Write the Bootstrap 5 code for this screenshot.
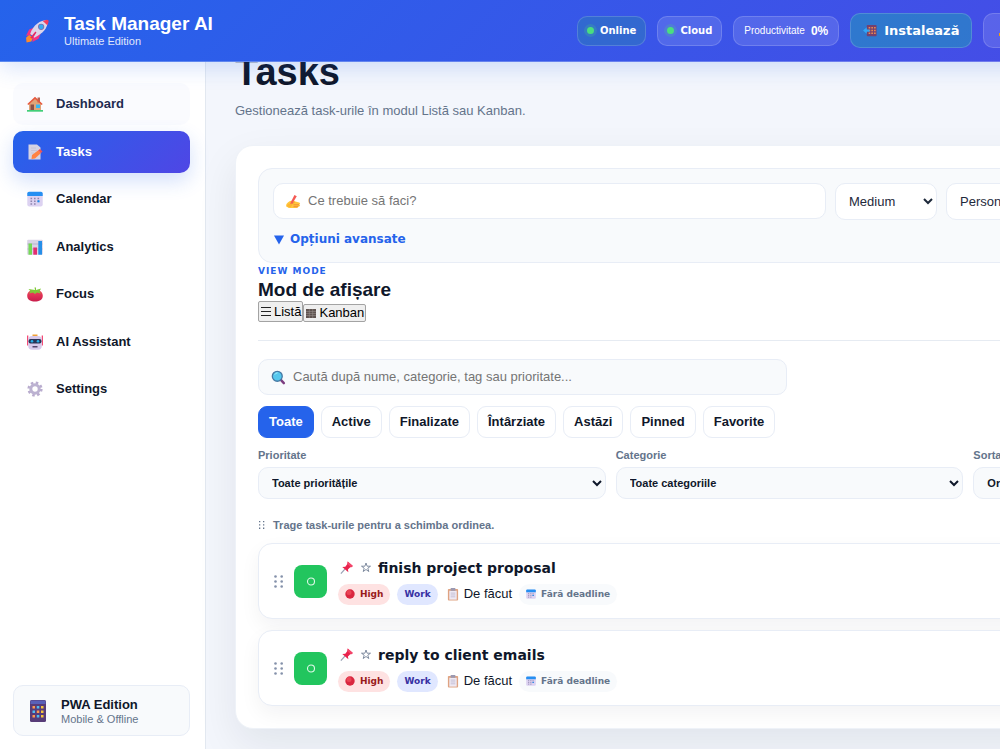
<!DOCTYPE html>
<html lang="ro">
<head>
<meta charset="utf-8">
<meta name="viewport" content="width=device-width, initial-scale=1">
<title>Task Manager AI</title>
<link href="https://cdn.jsdelivr.net/npm/bootstrap@5.3.0/dist/css/bootstrap.min.css" rel="stylesheet">
<style>
:root { --ink:#0f172a; --muted:#64748b; --line:#e8edf6; --soft:#f8fafc; --blue:#2563eb; --brand:linear-gradient(135deg,#2563eb,#4f46e5); }
body { font-family:"Liberation Sans",Arial,sans-serif; font-size:13px; line-height:16px; color:var(--ink); background:#f3f6fc; overflow:hidden; }
.heavy { font-family:"DejaVu Sans","Arial Black",sans-serif; font-weight:900; }
.ico { flex:none; display:block; width:16px; height:16px; }
.ico-xs { width:10px; height:10px; }
.ico-sm { width:12px; height:13px; }
.ico-md { width:15px; height:15px; }
.ico-lg { width:25px; height:25px; }
.ico-tall { height:22px; }
.shell { min-width:1373px; min-height:100vh; }
.topbar { height:62px; padding:0 25px; background:var(--brand); border-bottom:1px solid rgba(255,255,255,.25); box-shadow:0 6px 22px rgba(37,99,235,.18); z-index:5; }
.brand { width:552px; gap:14px; color:#fff; }
.brand-name { font-size:19px; line-height:20px; font-weight:700; }
.brand-sub { font-size:11px; line-height:14px; opacity:.85; }
.chips { gap:11px; }
.chip { gap:6px; height:30px; padding:0 9px; color:#fff; font-size:10px; white-space:nowrap; background:rgba(255,255,255,.12); border:1px solid rgba(255,255,255,.16); border-radius:10px; }
.chip b { font-size:12px; }
.chip-score { padding:0 10px; }
.chip-on { background:rgba(34,160,140,.26); }
.chip-dot { width:7px; height:7px; border-radius:50%; background:#4ade80; box-shadow:0 0 0 3px rgba(74,222,128,.18); }
.chip-btn { height:35px; padding:0 12px; font-size:13px; }
.chip-install { background:rgba(20,184,166,.38); }
.chip-bell { padding:0 15px; }
.sidebar { width:206px; padding:21px 15px 13px 13px; background:#fff; border-right:1px solid #e2e8f0; }
.menu { height:327px; }
.menu a { height:42px; padding:0 14px; gap:13px; color:var(--ink); font-weight:700; text-decoration:none; border-radius:10px; }
.menu a.hovered { background:#fafbfe; color:#1e2b50; }
.menu a.active { background:var(--brand); color:#fff; box-shadow:0 8px 20px rgba(37,99,235,.2); }
.edition { height:51px; padding:0 16px; gap:15px; background:var(--soft); border:1px solid var(--line); border-radius:10px; }
.edition small { font-size:11px; line-height:12px; color:var(--muted); }
.content { padding:0 29px 20px; margin-top:-12px; }
.content h1 { font-size:38px; line-height:44px; font-weight:700; margin:0 0 8px; }
.lede { color:var(--muted); line-height:18px; margin:0 0 25px; }
.panel { padding:22px; background:#fff; border:1px solid #eef2f8; border-radius:18px; box-shadow:0 16px 40px rgba(15,23,42,.08); }
.composer { padding:14px; background:var(--soft); border:1px solid var(--line); border-radius:14px; }
.composer-row { display:grid; grid-template-columns:minmax(0,1fr) 102px 102px 249px; gap:9px; }
.field { height:36px; padding:0 12px; gap:7px; border:1px solid var(--line); border-radius:10px; background:#fff; }
.field input { flex:1; min-width:0; padding:0; border:0; background:none; color:var(--ink); outline:0; }
.field input::placeholder { color:#757575; }
.pick { height:37px; padding:0 0 0 9px; border:1px solid var(--line); border-radius:10px; background:#fff; color:#1e293b; }
.toggle { margin-top:11px; padding:0 1px; gap:6px; color:var(--blue); background:none; border:0; font-size:12px; line-height:17px; }
.eyebrow { color:var(--blue); font-size:9px; line-height:16px; letter-spacing:1px; }
.panel h2 { font-size:19px; line-height:22px; font-weight:700; margin:0; }
.plain { height:18px; padding:0 1px; gap:2px; color:#000; background:#efefef; border:1px solid #a3a3a3; border-radius:2px; }
.plain.tall { height:21px; }
.rule { margin:18px 0 18px; border-top:1px solid #e6ebf2; opacity:1; }
.search { width:calc(50% - 3px); background:var(--soft); }
.tabs { gap:7px; margin-top:11px; }
.tab { height:32px; padding:0 10px; font-weight:700; color:var(--ink); background:#fff; border:1px solid var(--line); border-radius:9px; }
.tab.active { color:#fff; background:var(--blue); border-color:var(--blue); }
.filters { display:grid; grid-template-columns:repeat(3,minmax(0,1fr)); gap:10px; margin-top:10px; }
.filters label { display:block; font-size:11px; line-height:14px; font-weight:700; color:var(--muted); margin-bottom:5px; }
.filters select { width:100%; height:32px; font-size:11px; font-weight:700; color:var(--ink); background:var(--soft); }
.hint { margin:18px 0 10px; font-size:11px; line-height:16px; font-weight:700; color:var(--muted); gap:5px; }
.tasks { gap:11px; }
.task { min-height:76px; padding:0 14px; border:1px solid var(--line); border-radius:14px; box-shadow:0 8px 20px rgba(15,23,42,.05); background:#fff; }
.check { width:33px; height:33px; padding:0; margin:0 11px 0 9px; background:#22c55e; border:0; border-radius:8px; }
.task-head { gap:6px; padding-left:1px; margin-bottom:6px; }
.task-name { font-size:14px; line-height:20px; }
.task-meta { gap:7px; }
.tag { height:21px; padding:0 7px; gap:5px; font-size:9px; border-radius:11px; }
.tag-high { background:#fee2e2; color:#991b1b; }
.tag-work { background:#e0e7ff; color:#3730a3; }
.tag-date { background:var(--soft); color:var(--muted); }
.state { padding-left:2px; gap:5px; }
</style>
</head>
<body>
<svg width="0" height="0" class="position-absolute" aria-hidden="true">
<defs>
<linearGradient id="gTomato" x1="0" y1="0" x2="0" y2="1"><stop offset="0" stop-color="#f4455f"/><stop offset="1" stop-color="#c81d4b"/></linearGradient>
<symbol id="rocket" viewBox="0 0 24 24"><path d="M4 16 1 19l.5 4.500 4.500-1 2-4z" fill="#ff8a2a"/><path d="M9 9 4 11l-3 6 6-1zM15 15l-2 5-6 3 1-6z" fill="#f5317f"/><path d="M5 15C8 7 14 2 22 2c0 8-5 13-13 17z" fill="#dcd5ea"/><path d="M17 2.800 21 1.700q2 0 1.700 2L21.500 7z" fill="#f43b5e"/><circle cx="15.500" cy="8.500" r="3" fill="#7a6fb0"/><circle cx="15.500" cy="8.500" r="2.200" fill="#36a9f2"/><path d="m5 19 5-6 1 1-4 6z" fill="#e4265f"/></symbol>
<symbol id="house" viewBox="0 0 16 16"><path d="M2 7 8 2l6 5v7H2z" fill="#e0a478"/><path d="M10.500 1.500H13v5h-2.500z" fill="#b96552"/><path d="M.3 8 8 .8 15.700 8l-1 1L8 3 1.300 9z" fill="#e7593f"/><path d="M3.500 8.500H7V14H3.500z" fill="#8b5149"/><path d="M9 8.500h4V12H9z" fill="#36b8f5"/><path d="M0 14h16v1.700H0z" fill="#42ce78"/></symbol>
<symbol id="memo" viewBox="0 0 16 16"><path d="M1.500.5h8.500l3.500 3v12h-12z" fill="#d6d3e3"/><path d="M4 4h5M4 6.500h6M4 9h3" stroke="#c8c4d6"/><path d="m5 11 6-4.500 3 2.500-6 5.500-3.500.5z" fill="#ff8243"/><path d="m11 6.500 2-1.500 2.500 2.500L14 9z" fill="#ef5353"/></symbol>
<symbol id="cal" viewBox="0 0 16 16"><rect x=".3" y="1" width="15.400" height="14.500" rx="2" fill="#dcd2f1"/><path d="M.3 5V2.500Q.3.700 2 .7h12q1.700 0 1.700 1.800V5z" fill="#258ff2"/><path d="M3.500 7.500h10M3.500 10.200h10M3.500 13h7" stroke="#8f86ae" stroke-width="1.600" stroke-dasharray="1.600 1.900"/><path d="M10.500 9.300h2v2h-2z" fill="#168cef"/></symbol>
<symbol id="chart" viewBox="0 0 16 16"><rect x=".2" y=".7" width="15.600" height="15" rx="1" fill="#d9d3e6"/><path d="M.5 5h15M.5 10h15" stroke="#b9b1ce"/><path d="M1.500 4.500h3.500V15.700H1.500z" fill="#75d956"/><path d="M6.300 8.500H10v7.200H6.300z" fill="#e32e70"/><path d="M11.300 2H15v13.700h-3.700z" fill="#268fe8"/></symbol>
<symbol id="tomato" viewBox="0 0 16 16"><path d="M8 4.500C4 3.500.2 5.500.2 9.800.2 14 4 15.500 8 15.500s7.800-1.500 7.800-5.700C15.800 5.500 12 3.500 8 4.500z" fill="url(#gTomato)"/><path d="m8 4-.5-2.500h1.500L9 4l5-1.500-1.500 3L14 7.500l-4-1L8 8 6 6.500 2 7.500l1.500-2.300L1.500 3z" fill="#7fca38"/></symbol>
<symbol id="robot" viewBox="0 0 16 16"><path d="M0 1.500h1.300v10H0zM14.700 1.500H16v10h-1.300z" fill="#f34b75"/><path d="M5.500.5h5V4h-5z" fill="#f1a038"/><rect x="1.200" y="2" width="13.600" height="13.700" rx="4" fill="#d7c9eb"/><rect x="1.500" y="5" width="13" height="4.500" rx="2" fill="#283456"/><circle cx="5" cy="7.200" r="1.300" fill="#29aeea"/><circle cx="11" cy="7.200" r="1.300" fill="#29aeea"/><path d="M5.500 12h5v1.500h-5z" fill="#55456d"/></symbol>
<symbol id="gear" viewBox="0 0 16 16"><circle cx="8" cy="8" r="6.300" fill="none" stroke="#b9acce" stroke-width="2.600" stroke-dasharray="2.474 2.474"/><circle cx="8" cy="8" r="4.200" fill="none" stroke="#bcb2d1" stroke-width="3"/></symbol>
<symbol id="phone" viewBox="0 0 16 22"><rect width="16" height="22" rx="1.500" fill="#583c78"/><path d="M.5.5h15V4H.5z" fill="#5a60b8"/><g fill="#ff9750"><path d="M2.500 6H5v2.600H2.500zM6.800 10.500h2.500v2.600H6.800zM2.500 15H5v2.600H2.500z"/></g><g fill="#4fbdf2"><path d="M6.800 6h2.500v2.600H6.800zM2.500 10.500H5v2.600H2.500zM6.800 15h2.500v2.600H6.800z"/></g><g fill="#f6c53c"><path d="M11 6h2.500v2.600H11zM11 10.500h2.500v2.600H11zM11 15h2.500v2.600H11z"/></g></symbol>
<symbol id="install" viewBox="0 0 16 14"><rect x="4" y="1" width="10.500" height="12" rx="1" fill="#74406e"/><path d="M6 4h8M6 7h8M6 10h8" stroke="#f08a4e" stroke-width="1.700" stroke-dasharray="1.700 1.200"/><path d="m0 7 4-3.500v2.300h3v2.400H4v2.300z" fill="#30a7f5"/></symbol>
<symbol id="hand" viewBox="0 0 16 16"><path d="M2 9C4 7 8 6 10 8l4 1q2 1 0 2l1 1q0 1.500-2 1.500l-1 1.500H3l-3-2q0-3 2-4z" fill="#ffc53d"/><path d="m4 11 5-2M8 11.500h6M8 13.500h5" stroke="#ef8e31"/><path d="m3 13 6-12 2.500 1.500L5 13z" fill="#f45a54"/><path d="M2 11q4-2 5 0l-2 3-4-1z" fill="#ffb52f"/></symbol>
<symbol id="lens" viewBox="0 0 16 16"><path d="m10 10 3.700 4" stroke="#7c3d80" stroke-width="2.600" stroke-linecap="round"/><circle cx="6.700" cy="6.700" r="5.300" fill="#55c7ed" stroke="#4779a4" stroke-width="1.400"/><path d="M4 5q1-2 3-2" stroke="#a5effb" fill="none"/></symbol>
<symbol id="pin" viewBox="0 0 16 16"><path d="m6.500 9.500-4.500 5" stroke="#97a0b4" stroke-width="1.300"/><path d="m9.300 1.500 5.500 4.800-1.800 1.500-1-.2-2.500 2.600.5 2.800-6.500-5.500 3.200-.3 2.200-3z" fill="#e9234d"/><path d="m9.300 1.500 5.500 4.800-1.800 1.500-4.100-3.600z" fill="#f4466b"/></symbol>
<symbol id="clip" viewBox="0 0 12 14"><rect x=".5" y="1" width="11" height="12.500" rx="1" fill="#dfa382"/><path d="M2 3h8v9.500H2z" fill="#eee9f4"/><path d="M3.500 0h5v3h-5z" fill="#9c99b1"/><path d="M3.500 5.500h5M3.500 7.500h5M3.500 9.500h5" stroke="#b9b2cb" stroke-width=".8"/></symbol>
<symbol id="star" viewBox="0 0 12 12"><path d="m6 1.500 1.100 3.200h3.400L7.800 6.700l1 3.300L6 8l-2.800 2 1-3.300-2.700-2h3.400z" fill="none" stroke="#64748b" stroke-width=".8"/></symbol>
<symbol id="dots" viewBox="0 0 12 13"><g fill="#8491aa"><circle cx="2.500" cy="1.500" r="1.300"/><circle cx="8.700" cy="1.500" r="1.300"/><circle cx="2.500" cy="6.500" r="1.300"/><circle cx="8.700" cy="6.500" r="1.300"/><circle cx="2.500" cy="11.500" r="1.300"/><circle cx="8.700" cy="11.500" r="1.300"/></g></symbol>
<symbol id="dots-sm" viewBox="0 0 10 10"><path d="M1 1h1.300v1.300H1zM5 1h1.300v1.300H5zM1 4.300h1.300v1.300H1zM5 4.300h1.300v1.300H5zM1 7.600h1.300v1.300H1zM5 7.600h1.300v1.300H5z" fill="#64748b"/></symbol>
<symbol id="ring" viewBox="0 0 10 10"><circle cx="5" cy="5.500" r="3.500" fill="none" stroke="#dff8e8" stroke-width="1.100"/></symbol>
<symbol id="ball" viewBox="0 0 10 10"><circle cx="5" cy="5" r="4.700" fill="#d9263f"/><circle cx="4" cy="3.500" r="2.500" fill="#ea4455"/></symbol>
<symbol id="list" viewBox="0 0 12 13"><path d="M1 2.500h10M1 6.500h10M1 10.500h10" stroke="#222"/></symbol>
<symbol id="board" viewBox="0 0 12 13"><path d="M1 2h10v9H1z" fill="#5f5350"/><path d="M1 4.500h10M1 6.500h10M1 8.500h10M4.300 2v9M7.700 2v9" stroke="#9d9591" stroke-width=".5"/></symbol>
<symbol id="caret" viewBox="0 0 10 10"><path d="M0 .5h10l-5 9z" fill="#2563eb"/></symbol>
<symbol id="bell" viewBox="0 0 16 16"><path d="M2 12c2-2 1-8 6-9 5 1 4 7 6 9z" fill="#fbbf24"/><path d="M0 10h3v3H0z" fill="#f59e0b"/></symbol>
</defs>
</svg>

<div class="shell d-flex flex-column">
  <header class="topbar d-flex align-items-center position-relative">
    <div class="brand d-flex align-items-center flex-shrink-0">
      <svg class="ico ico-lg"><use href="#rocket"/></svg>
      <div><div class="brand-name">Task Manager AI</div><div class="brand-sub">Ultimate Edition</div></div>
    </div>
    <div class="chips d-flex align-items-center">
      <span class="chip chip-on heavy d-flex align-items-center"><i class="chip-dot"></i>Online</span>
      <span class="chip heavy d-flex align-items-center"><i class="chip-dot"></i>Cloud</span>
      <span class="chip chip-score d-flex align-items-center">Productivitate <b>0%</b></span>
      <button type="button" class="chip chip-btn chip-install heavy d-flex align-items-center"><svg class="ico ico-md"><use href="#install"/></svg>Instalează</button>
      <button type="button" class="chip chip-btn chip-bell d-flex align-items-center" aria-label="Notificări"><svg class="ico"><use href="#bell"/></svg></button>
    </div>
  </header>

  <div class="d-flex flex-grow-1">
    <aside class="sidebar d-flex flex-column justify-content-between flex-shrink-0">
      <nav class="menu d-flex flex-column justify-content-between">
        <a href="#" class="hovered d-flex align-items-center"><svg class="ico"><use href="#house"/></svg>Dashboard</a>
        <a href="#" class="active d-flex align-items-center"><svg class="ico"><use href="#memo"/></svg>Tasks</a>
        <a href="#" class="d-flex align-items-center"><svg class="ico"><use href="#cal"/></svg>Calendar</a>
        <a href="#" class="d-flex align-items-center"><svg class="ico"><use href="#chart"/></svg>Analytics</a>
        <a href="#" class="d-flex align-items-center"><svg class="ico"><use href="#tomato"/></svg>Focus</a>
        <a href="#" class="d-flex align-items-center"><svg class="ico"><use href="#robot"/></svg>AI Assistant</a>
        <a href="#" class="d-flex align-items-center"><svg class="ico"><use href="#gear"/></svg>Settings</a>
      </nav>
      <div class="edition d-flex align-items-center">
        <svg class="ico ico-tall"><use href="#phone"/></svg>
        <div class="d-flex flex-column"><b>PWA Edition</b><small>Mobile &amp; Offline</small></div>
      </div>
    </aside>

    <main class="content flex-grow-1">
      <h1>Tasks</h1>
      <p class="lede">Gestionează task-urile în modul Listă sau Kanban.</p>
      <section class="panel">
        <div class="composer">
          <div class="composer-row">
            <div class="field d-flex align-items-center"><svg class="ico ico-md"><use href="#hand"/></svg><input type="text" placeholder="Ce trebuie să faci?" aria-label="Ce trebuie să faci?"></div>
            <select class="pick" aria-label="Prioritate task"><option>Medium</option></select>
            <select class="pick" aria-label="Categorie task"><option>Personal</option></select>
          </div>
          <button type="button" class="toggle heavy d-flex align-items-center"><svg class="ico ico-xs"><use href="#caret"/></svg>Opțiuni avansate</button>
        </div>
        <div class="eyebrow heavy">VIEW MODE</div>
        <h2>Mod de afișare</h2>
        <div class="d-flex align-items-end">
          <button type="button" class="plain tall d-flex align-items-center"><svg class="ico ico-sm"><use href="#list"/></svg>Listă</button>
          <button type="button" class="plain d-flex align-items-center"><svg class="ico ico-sm"><use href="#board"/></svg>Kanban</button>
        </div>
        <hr class="rule">
        <div class="field search d-flex align-items-center"><svg class="ico ico-md"><use href="#lens"/></svg><input type="search" placeholder="Caută după nume, categorie, tag sau prioritate..." aria-label="Caută"></div>
        <div class="tabs d-flex">
          <button type="button" class="tab active">Toate</button>
          <button type="button" class="tab">Active</button>
          <button type="button" class="tab">Finalizate</button>
          <button type="button" class="tab">Întârziate</button>
          <button type="button" class="tab">Astăzi</button>
          <button type="button" class="tab">Pinned</button>
          <button type="button" class="tab">Favorite</button>
        </div>
        <div class="filters">
          <div><label for="f1">Prioritate</label><select id="f1" class="pick"><option>Toate prioritățile</option></select></div>
          <div><label for="f2">Categorie</label><select id="f2" class="pick"><option>Toate categoriile</option></select></div>
          <div><label for="f3">Sortare</label><select id="f3" class="pick"><option>Ordine manuală</option></select></div>
        </div>
        <div class="hint d-flex align-items-center"><svg class="ico ico-xs"><use href="#dots-sm"/></svg>Trage task-urile pentru a schimba ordinea.</div>
        <div class="tasks d-flex flex-column">
          <article class="task d-flex align-items-center">
            <svg class="ico ico-sm"><use href="#dots"/></svg>
            <button type="button" class="check d-flex align-items-center justify-content-center" aria-label="Finalizează"><svg class="ico ico-xs"><use href="#ring"/></svg></button>
            <div>
              <div class="task-head d-flex align-items-center"><svg class="ico ico-md"><use href="#pin"/></svg><svg class="ico ico-sm"><use href="#star"/></svg><span class="task-name heavy">finish project proposal</span></div>
              <div class="task-meta d-flex align-items-center">
                <span class="tag tag-high heavy d-flex align-items-center"><svg class="ico ico-xs"><use href="#ball"/></svg>High</span>
                <span class="tag tag-work heavy d-flex align-items-center">Work</span>
                <span class="state d-flex align-items-center"><svg class="ico ico-sm"><use href="#clip"/></svg>De făcut</span>
                <span class="tag tag-date heavy d-flex align-items-center"><svg class="ico ico-xs"><use href="#cal"/></svg>Fără deadline</span>
              </div>
            </div>
          </article>
          <article class="task d-flex align-items-center">
            <svg class="ico ico-sm"><use href="#dots"/></svg>
            <button type="button" class="check d-flex align-items-center justify-content-center" aria-label="Finalizează"><svg class="ico ico-xs"><use href="#ring"/></svg></button>
            <div>
              <div class="task-head d-flex align-items-center"><svg class="ico ico-md"><use href="#pin"/></svg><svg class="ico ico-sm"><use href="#star"/></svg><span class="task-name heavy">reply to client emails</span></div>
              <div class="task-meta d-flex align-items-center">
                <span class="tag tag-high heavy d-flex align-items-center"><svg class="ico ico-xs"><use href="#ball"/></svg>High</span>
                <span class="tag tag-work heavy d-flex align-items-center">Work</span>
                <span class="state d-flex align-items-center"><svg class="ico ico-sm"><use href="#clip"/></svg>De făcut</span>
                <span class="tag tag-date heavy d-flex align-items-center"><svg class="ico ico-xs"><use href="#cal"/></svg>Fără deadline</span>
              </div>
            </div>
          </article>
        </div>
      </section>
    </main>
  </div>
</div>
<script src="https://cdn.jsdelivr.net/npm/bootstrap@5.3.0/dist/js/bootstrap.bundle.min.js"></script>
</body>
</html>
